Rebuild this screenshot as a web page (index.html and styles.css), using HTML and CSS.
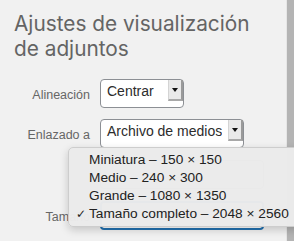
FILE: index.html
```html
<!DOCTYPE html>
<html lang="es">
<head>
  <meta charset="UTF-8">
  <meta name="viewport" content="width=device-width, initial-scale=1.0">
  <title>Ajustes de visualización de adjuntos</title>
  <link rel="stylesheet" href="styles.css">
</head>
<body>
  <div class="frame">
    <div class="content">
      <h2 class="title">Ajustes de visualización <span class="keep">de adjuntos</span></h2>

      <div class="settings">
        <div class="row">
          <span class="label">Alineación</span>
          <div class="select align">
            <span class="value">Centrar</span>
            <span class="arrow"></span>
          </div>
        </div>

        <div class="row">
          <span class="label">Enlazado a</span>
          <div class="select link">
            <span class="value">Archivo de medios</span>
            <span class="arrow"></span>
          </div>
        </div>

        <div class="row url-row">
          <span class="label"></span>
          <div class="input"></div>
        </div>

        <div class="row">
          <span class="label">Tamaño</span>
          <div class="select size focused"></div>
        </div>
      </div>
    </div>
    <div class="scrollbar"></div>
  </div>

  <!-- menú desplegable abierto del tamaño -->
  <ul class="menu">
    <li>Miniatura – 150 × 150</li>
    <li>Medio – 240 × 300</li>
    <li>Grande – 1080 × 1350</li>
    <li class="checked">Tamaño completo – 2048 × 2560</li>
  </ul>
</body>
</html>
```

FILE: styles.css
```css
:root {
  --bg: #f1f1f1;
  --text-muted: #666;
  --text: #2c2c2c;
  --border: #8c8f94;
  --focus: #2271b1;
}

* {
  box-sizing: border-box;
  margin: 0;
  padding: 0;
}

body {
  font-family: 'Liberation Sans', Arial, sans-serif;
  background: var(--bg);
  width: 294px;
  height: 241px;
  overflow: hidden;
  position: relative;
}

.frame {
  display: flex;
  height: 100%;
}

.content {
  flex: 1;
  min-width: 0;
}

.scrollbar {
  width: 8px;
  border-left: 1px solid #e6e6e6;
  background: #b4b4b4;
}

/* Heading */
.title {
  font-family: Inter, 'Liberation Sans', sans-serif;
  font-size: 20.8px;
  font-weight: normal;
  line-height: 25px;
  color: #646464;
  padding: 11px 0 0 14px;
}

.title .keep {
  white-space: nowrap;
}

/* Rows */
.settings {
  display: flex;
  flex-direction: column;
  gap: 11px;
  margin-top: 18px;
}

.row {
  display: grid;
  grid-template-columns: 90px 1fr;
  column-gap: 10px;
  align-items: center;
}

.url-row {
  height: 31px;
}

.label {
  text-align: right;
  font-size: 12.5px;
  color: var(--text-muted);
  padding-top: 3px;
}

.select {
  display: flex;
  align-items: flex-start;
  justify-content: space-between;
  height: 29px;
  background: #fff;
  border: 1px solid var(--border);
  border-radius: 4px;
  font-size: 14px;
  color: var(--text);
}

.select .value {
  line-height: 22px;
  padding-left: 6px;
  white-space: nowrap;
  overflow: hidden;
}

.select.align { width: 84px; }
.select.link { width: 144px; }
.select.size { width: 164px; }

.select.focused {
  border: 2px solid var(--focus);
}

.arrow {
  position: relative;
  flex: none;
  width: 15px;
  height: 21px;
  background: #e9e9e9;
  border-left: 1px solid #d4d4d4;
  border-right: 2px solid #9a9a9a;
  border-bottom: 2px solid #a8a8a8;
}

.arrow::after {
  content: '';
  position: absolute;
  left: 3px;
  top: 8px;
  border-left: 3px solid transparent;
  border-right: 3px solid transparent;
  border-top: 4px solid #111;
}

.input {
  height: 29px;
  width: 164px;
  background: #fff;
  border: 1px solid var(--border);
  border-radius: 4px;
}

/* Open dropdown */
.menu {
  position: absolute;
  left: 68px;
  top: 147px;
  width: 240px;
  height: 80px;
  list-style: none;
  padding-top: 3px;
  background: rgba(235, 235, 235, 0.98);
  border: 1px solid #cdcdcd;
  border-radius: 5px;
  box-shadow: 0 3px 8px rgba(0, 0, 0, 0.18);
  font-size: 13.7px;
  color: #222;
}

.menu li {
  line-height: 18px;
  padding-left: 20px;
  white-space: nowrap;
  position: relative;
}

.menu li.checked::before {
  content: '✓';
  position: absolute;
  left: 7px;
  font-family: 'DejaVu Sans', sans-serif;
  font-size: 12px;
}
```
